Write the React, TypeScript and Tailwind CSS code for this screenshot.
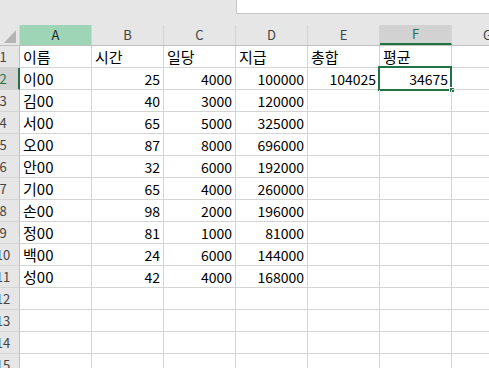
const cols = ['A', 'B', 'C', 'D', 'E', 'F', 'G']

const rows: (string | number | null)[][] = [
  ['이름', '시간', '일당', '지급', '총합', '평균'],
  ['이00', 25, 4000, 100000, 104025, 34675],
  ['김00', 40, 3000, 120000],
  ['서00', 65, 5000, 325000],
  ['오00', 87, 8000, 696000],
  ['안00', 32, 6000, 192000],
  ['기00', 65, 4000, 260000],
  ['손00', 98, 2000, 196000],
  ['정00', 81, 1000, 81000],
  ['백00', 24, 6000, 144000],
  ['성00', 42, 4000, 168000],
  [],
  [],
  [],
  [],
]

export default function App() {
  return (
    <div
      className="w-[489px] h-[368px] overflow-hidden bg-white text-black"
      style={{ fontFamily: '"Noto Sans CJK KR", "Noto Sans", sans-serif' }}
    >
      {/* top strip with formula box */}
      <div className="h-[25px] bg-[#e6e6e6] flex justify-end items-start">
        <div className="w-[253px] h-[14px] bg-white border-l border-b border-[#c6c6c6]" />
      </div>

      {/* column headers */}
      <div className="flex h-[21px] bg-[#e6e6e6] border-b border-[#c0c0c0]">
        <div className="w-[20px] shrink-0 relative border-r border-[#d4d4d4]">
          <svg className="absolute left-0 top-0" width="20" height="21" viewBox="0 0 20 21">
            <polygon points="4,18 16,18 16,5" fill="#b4b4b4" />
          </svg>
        </div>
        {cols.map((c) => (
          <div
            key={c}
            className={
              'w-[72px] shrink-0 flex items-center justify-center text-[13px] border-r ' +
              (c === 'A'
                ? 'bg-[#9fd5b7] text-[#262626] border-[#d4d4d4]'
                : c === 'F'
                  ? 'bg-[#d2d2d2] text-[#217346] border-[#d4d4d4] border-b-2 border-b-[#217346]'
                  : 'text-[#444] border-[#d4d4d4]')
            }
          >
            {c}
          </div>
        ))}
      </div>

      {/* rows */}
      {rows.map((row, r) => (
        <div key={r} className="flex h-[22px]">
          <div
            className={
              'w-[20px] shrink-0 overflow-hidden border-b border-[#d4d4d4] ' +
              (r === 1
                ? 'bg-[#d2d2d2] text-[#217346] border-r-2 border-r-[#217346]'
                : 'bg-[#e6e6e6] text-[#444] border-r border-r-[#c0c0c0]')
            }
          >
            <div className="w-[30px] ml-[-12px] h-full flex items-center justify-center pt-[1px] text-[13px]">
              {r + 1}
            </div>
          </div>
          {cols.map((c, ci) => {
            const v = row[ci]
            const isNum = typeof v === 'number'
            const selected = r === 1 && c === 'F'
            return (
              <div
                key={c}
                className={
                  'w-[72px] shrink-0 relative flex items-center pt-[2px] border-r border-b border-[#d4d4d4] ' +
                  (isNum ? 'justify-end pr-[3px] text-[14px]' : 'justify-start pl-[3px] text-[15px]')
                }
              >
                {v ?? ''}
                {selected && (
                  <>
                    <div className="absolute left-[-2px] top-[-2px] right-[-1px] bottom-[-2px] border-2 border-[#217346]" />
                    <div className="absolute right-[-4px] bottom-[-4px] w-[6px] h-[6px] bg-[#217346] border border-white" />
                  </>
                )}
              </div>
            )
          })}
        </div>
      ))}
    </div>
  )
}
